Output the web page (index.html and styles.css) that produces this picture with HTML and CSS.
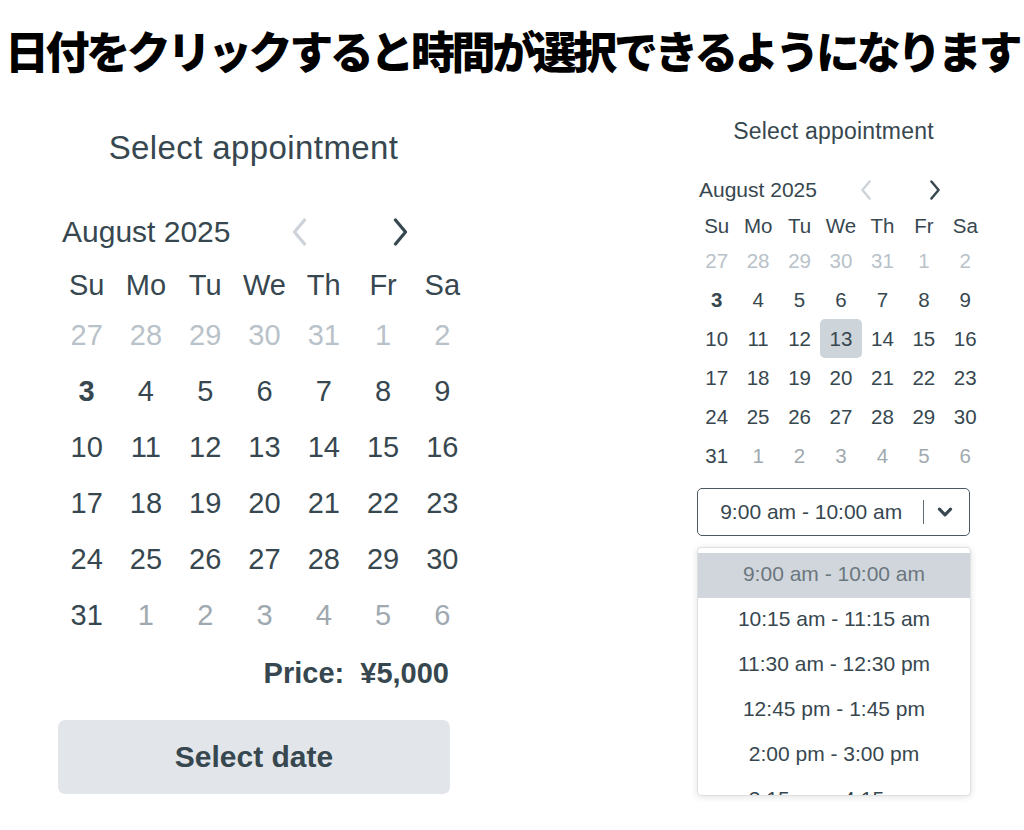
FILE: index.html
```html
<!DOCTYPE html>
<html lang="ja">
<head>
<meta charset="utf-8">
<link rel="stylesheet" href="styles.css">
</head>
<body>
<h1 class="headline"><span class="headline-text">日付をクリックすると時間が選択できるようになります</span></h1>
<div class="panels">
  <section class="panel big">
    <div class="title">Select appointment</div>
    <div class="month-row">
      <span class="month">August 2025</span>
      <span class="nav prev"><svg viewBox="0 0 16 28" class="chev"><polyline points="13,2 3,14 13,26"/></svg></span>
      <span class="nav next"><svg viewBox="0 0 16 28" class="chev"><polyline points="3,2 13,14 3,26"/></svg></span>
    </div>
    <div class="grid">
      <span class="wd">Su</span><span class="wd">Mo</span><span class="wd">Tu</span><span class="wd">We</span><span class="wd">Th</span><span class="wd">Fr</span><span class="wd">Sa</span>
      <span class="d prevm">27</span><span class="d prevm">28</span><span class="d prevm">29</span><span class="d prevm">30</span><span class="d prevm">31</span><span class="d prevm">1</span><span class="d prevm">2</span>
      <span class="d today">3</span><span class="d">4</span><span class="d">5</span><span class="d">6</span><span class="d">7</span><span class="d">8</span><span class="d">9</span>
      <span class="d">10</span><span class="d">11</span><span class="d">12</span><span class="d">13</span><span class="d">14</span><span class="d">15</span><span class="d">16</span>
      <span class="d">17</span><span class="d">18</span><span class="d">19</span><span class="d">20</span><span class="d">21</span><span class="d">22</span><span class="d">23</span>
      <span class="d">24</span><span class="d">25</span><span class="d">26</span><span class="d">27</span><span class="d">28</span><span class="d">29</span><span class="d">30</span>
      <span class="d">31</span><span class="d nextm">1</span><span class="d nextm">2</span><span class="d nextm">3</span><span class="d nextm">4</span><span class="d nextm">5</span><span class="d nextm">6</span>
    </div>
    <div class="price">Price:&nbsp;&nbsp;¥5,000</div>
    <button class="select-btn">Select date</button>
  </section>

  <section class="panel small">
    <div class="title">Select appointment</div>
    <div class="month-row">
      <span class="month">August 2025</span>
      <span class="nav prev"><svg viewBox="0 0 16 28" class="chev"><polyline points="13,2 3,14 13,26"/></svg></span>
      <span class="nav next"><svg viewBox="0 0 16 28" class="chev"><polyline points="3,2 13,14 3,26"/></svg></span>
    </div>
    <div class="grid">
      <span class="wd">Su</span><span class="wd">Mo</span><span class="wd">Tu</span><span class="wd">We</span><span class="wd">Th</span><span class="wd">Fr</span><span class="wd">Sa</span>
      <span class="d prevm">27</span><span class="d prevm">28</span><span class="d prevm">29</span><span class="d prevm">30</span><span class="d prevm">31</span><span class="d prevm">1</span><span class="d prevm">2</span>
      <span class="d today">3</span><span class="d">4</span><span class="d">5</span><span class="d">6</span><span class="d">7</span><span class="d">8</span><span class="d">9</span>
      <span class="d">10</span><span class="d">11</span><span class="d">12</span><span class="d sel">13</span><span class="d">14</span><span class="d">15</span><span class="d">16</span>
      <span class="d">17</span><span class="d">18</span><span class="d">19</span><span class="d">20</span><span class="d">21</span><span class="d">22</span><span class="d">23</span>
      <span class="d">24</span><span class="d">25</span><span class="d">26</span><span class="d">27</span><span class="d">28</span><span class="d">29</span><span class="d">30</span>
      <span class="d">31</span><span class="d nextm">1</span><span class="d nextm">2</span><span class="d nextm">3</span><span class="d nextm">4</span><span class="d nextm">5</span><span class="d nextm">6</span>
    </div>
    <div class="time-select">
      <span class="time-value">9:00 am - 10:00 am</span>
      <span class="divider"></span>
      <svg class="down" viewBox="0 0 14 9"><polyline points="2,2 7,7 12,2"/></svg>
    </div>
    <ul class="dropdown">
      <li class="opt active">9:00 am - 10:00 am</li>
      <li class="opt">10:15 am - 11:15 am</li>
      <li class="opt">11:30 am - 12:30 pm</li>
      <li class="opt">12:45 pm - 1:45 pm</li>
      <li class="opt">2:00 pm - 3:00 pm</li>
      <li class="opt">3:15 pm - 4:15 pm</li>
    </ul>
  </section>
</div>
</body>
</html>
```

FILE: styles.css
```css
html, body {
  margin: 0;
  padding: 0;
  background: #ffffff;
}

body {
  width: 1024px;
  height: 830px;
  overflow: hidden;
  font-family: "Liberation Sans", Arial, sans-serif;
  color: #37474f;
}

.headline {
  margin: 0;
  height: 100px;
  display: flex;
  justify-content: center;
  align-items: center;
  font-family: "Noto Sans CJK JP", sans-serif;
  font-weight: 900;
  font-size: 44px;
  line-height: 1;
  color: #000000;
  white-space: nowrap;
}

.headline-text {
  display: inline-block;
  letter-spacing: -3.4px;
}

.panels {
  display: flex;
  align-items: flex-start;
  padding-left: 57px;
  gap: 223px;
}

.panel {
  display: flex;
  flex-direction: column;
}

/* ---------- big panel ---------- */
.big {
  width: 416px;
}

.big .title {
  width: 391px;
  margin: 28px 0 0 1px;
  text-align: center;
  font-size: 33px;
  line-height: 40px;
  letter-spacing: 0.4px;
}

.month-row {
  display: flex;
  align-items: center;
}

.big .month-row {
  margin-top: 44px;
  height: 40px;
  padding-left: 5px;
}

.big .month {
  width: 217px;
  font-size: 30px;
}

.nav {
  display: flex;
  justify-content: center;
  align-items: center;
}

.chev {
  fill: none;
  stroke-linecap: round;
  stroke-linejoin: round;
}

.prev .chev { stroke: #cdd3d8; }
.next .chev { stroke: #37474f; }

.big .nav { width: 40px; }
.big .next { margin-left: 61px; }
.big .chev { width: 17px; height: 28px; stroke-width: 3.2; }

.grid {
  display: grid;
  grid-template-columns: repeat(7, 1fr);
  text-align: center;
}

.big .grid {
  width: 415px;
  margin-top: 11px;
  grid-template-rows: 44px repeat(6, 56px);
  font-size: 29px;
}

.wd, .d {
  display: flex;
  justify-content: center;
  align-items: center;
}

.prevm { color: #b9c2c9; }
.nextm { color: #a0a9b0; }
.today { font-weight: bold; }

.price {
  width: 392px;
  margin-top: 12px;
  line-height: 36px;
  text-align: right;
  font-size: 29px;
  font-weight: bold;
}

.select-btn {
  width: 392px;
  height: 74px;
  margin: 29px 0 0 1px;
  border: none;
  border-radius: 7px;
  background: #e2e6ea;
  color: #37474f;
  font-family: "Liberation Sans", Arial, sans-serif;
  font-weight: bold;
  font-size: 30px;
}

/* ---------- small panel ---------- */
.small {
  width: 290px;
}

.small .title {
  width: 273px;
  margin: 17px 0 0 1px;
  text-align: center;
  font-size: 23px;
  line-height: 28px;
  letter-spacing: 0.2px;
}

.small .month-row {
  margin-top: 30px;
  height: 30px;
  padding-left: 3px;
}

.small .month {
  width: 153px;
  font-size: 21px;
}

.small .nav { width: 28px; }
.small .next { margin-left: 41px; }
.small .chev { width: 12px; height: 20px; stroke-width: 3.4; }

.small .grid {
  width: 290px;
  margin-top: 6px;
  grid-template-rows: 30px repeat(6, 39px);
  font-size: 20.5px;
}

.small .sel {
  background: #cdd4da;
  border-radius: 5px;
}

.time-select {
  box-sizing: border-box;
  width: 273px;
  height: 48px;
  margin: 13px 0 0 1px;
  border: 1.5px solid #4a5961;
  border-radius: 5px;
  display: flex;
  align-items: center;
  font-size: 21px;
}

.time-value {
  flex: 1;
  text-align: center;
  padding-left: 2px;
}

.divider {
  width: 1.5px;
  height: 24px;
  background: #5f6d75;
  margin-right: 13px;
}

.down {
  width: 16px;
  height: 10px;
  margin-right: 16px;
  fill: none;
  stroke: #37474f;
  stroke-width: 2.8;
  stroke-linecap: round;
  stroke-linejoin: round;
}

.dropdown {
  box-sizing: border-box;
  list-style: none;
  width: 274px;
  height: 249px;
  margin: 11px 0 0 1px;
  padding: 5px 0 0 0;
  border: 1px solid #dde1e4;
  border-radius: 4px;
  box-shadow: 0 1px 7px rgba(0, 0, 0, 0.12);
  overflow: hidden;
  background: #ffffff;
}

.opt {
  height: 45px;
  display: flex;
  justify-content: center;
  align-items: center;
  padding-bottom: 3px;
  box-sizing: border-box;
  font-size: 21px;
}

.opt.active {
  background: #d1d6dc;
  color: #6b777f;
}
```
